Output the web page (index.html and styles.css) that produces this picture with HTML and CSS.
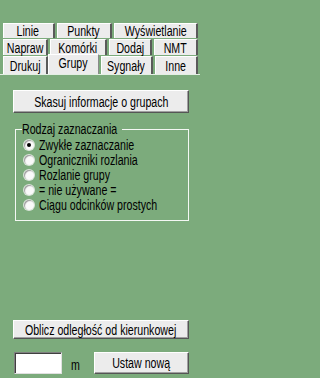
FILE: index.html
```html
<!DOCTYPE html>
<html lang="pl">
<head>
<meta charset="utf-8">
<link rel="stylesheet" href="styles.css">
</head>
<body>
<div class="app">
  <div class="tabs">
    <div class="row r1">
      <div class="tab" style="width:52px"><span class="t">Linie</span></div>
      <div class="tab" style="width:56px"><span class="t">Punkty</span></div>
      <div class="tab" style="width:84px"><span class="t">Wyświetlanie</span></div>
    </div>
    <div class="row r2">
      <div class="tab" style="width:45px"><span class="t">Napraw</span></div>
      <div class="tab" style="width:57px"><span class="t">Komórki</span></div>
      <div class="tab" style="width:43px"><span class="t">Dodaj</span></div>
      <div class="tab" style="width:44px"><span class="t">NMT</span></div>
    </div>
    <div class="row r3">
      <div class="tab" style="width:46px"><span class="t">Drukuj</span></div>
      <div class="tab active" style="width:51px"><span class="t">Grupy</span></div>
      <div class="tab" style="width:52px"><span class="t">Sygnały</span></div>
      <div class="tab" style="width:44px"><span class="t">Inne</span></div>
    </div>
  </div>
  <div class="panel">
    <button class="btn btn-clear"><span class="t">Skasuj informacje o grupach</span></button>
    <fieldset class="group">
      <legend><span class="t l">Rodzaj zaznaczania</span></legend>
      <div class="opt"><span class="radio checked"></span><span class="t l">Zwykłe zaznaczanie</span></div>
      <div class="opt"><span class="radio"></span><span class="t l">Ograniczniki rozlania</span></div>
      <div class="opt"><span class="radio"></span><span class="t l">Rozlanie grupy</span></div>
      <div class="opt"><span class="radio"></span><span class="t l">= nie używane =</span></div>
      <div class="opt"><span class="radio"></span><span class="t l">Ciągu odcinków prostych</span></div>
    </fieldset>
    <div class="spacer"></div>
    <button class="btn btn-calc"><span class="t">Oblicz odległość od kierunkowej</span></button>
    <div class="bottom">
      <input class="field" type="text">
      <span class="unit"><span class="t l">m</span></span>
      <button class="btn btn-set"><span class="t">Ustaw nową</span></button>
    </div>
  </div>
</div>
</body>
</html>
```

FILE: styles.css
```css
html, body {
  margin: 0;
  padding: 0;
  background: #7cab7c;
}
body {
  width: 200px;
  height: 378px;
  overflow: hidden;
  font-family: "Liberation Sans", Arial, sans-serif;
  font-size: 14px;
  color: #000;
}
.t {
  display: inline-block;
  white-space: nowrap;
  transform: scaleX(0.76);
  transform-origin: center center;
}
.t.l {
  transform-origin: left center;
}
.app {
  display: flex;
  flex-direction: column;
  height: 378px;
}
.tabs {
  padding: 23px 2px 0 3px;
  display: flex;
  flex-direction: column;
  gap: 1px;
}
.row {
  display: flex;
  gap: 2px;
  height: 15px;
}
.r2 { height: 16px; }
.r3 { height: 18px; gap: 0; }
.r3 .tab:nth-child(3),
.r3 .tab:nth-child(4) { margin-left: 2px; }
.tab {
  box-sizing: border-box;
  background: #ececec;
  border-top: 1px solid #fff;
  border-left: 1px solid #fff;
  border-right: 2px solid #5a5a5a;
  display: flex;
  align-items: center;
  justify-content: center;
  line-height: 14px;
  overflow: visible;
}
.tab.active {
  height: 20px;
  margin-top: -2px;
  border-right: 1px solid #8a8a8a;
  align-items: flex-start;
  padding-top: 1px;
  position: relative;
  z-index: 1;
}
.panel {
  flex: 1;
  border-top: 1px solid #e4efe4;
  display: flex;
  flex-direction: column;
  padding: 0 11px 4px 13px;
}
.btn {
  font: inherit;
  color: #000;
  background: #ececec;
  border: 1px solid;
  border-color: #fff #555 #555 #fff;
  box-shadow: inset -1px -1px 0 #a0a0a0;
  padding: 0;
  margin: 0;
  line-height: 14px;
  display: flex;
  align-items: center;
  justify-content: center;
  overflow: visible;
}
.btn-clear {
  margin-top: 15px;
  height: 23px;
}
.group {
  margin: 10px 0 0 2px;
  border: 1px solid #f4f8f4;
  padding: 0 0 8px 8px;
  min-width: 0;
}
.group legend {
  padding: 0;
  margin-left: -2px;
  margin-bottom: 2px;
  line-height: 12px;
  width: 100px;
}
.opt {
  display: flex;
  align-items: center;
  height: 15px;
  gap: 5px;
}
.radio {
  width: 10px;
  height: 10px;
  border-radius: 50%;
  background: #fafafa;
  box-shadow: inset 1px 1px 1px #9a9a9a, 0 0 0 1px #d8e4d8;
  position: relative;
  flex: none;
}
.radio.checked::after {
  content: "";
  position: absolute;
  left: 3px;
  top: 3px;
  width: 4px;
  height: 4px;
  border-radius: 50%;
  background: #000;
}
.spacer { flex: 1; }
.btn-calc {
  height: 19px;
}
.bottom {
  display: flex;
  align-items: center;
  margin-top: 13px;
  height: 22px;
}
.field {
  box-sizing: border-box;
  width: 48px;
  height: 22px;
  margin: 0 0 0 1px;
  padding: 0;
  background: #fff;
  border: 1px solid;
  border-color: #808080 #e0e0e0 #e0e0e0 #808080;
  box-shadow: inset 1px 1px 0 #404040;
}
.unit {
  margin-left: 9px;
  width: 23px;
  margin-top: 4px;
}
.btn-set {
  height: 22px;
  width: 96px;
}
```
